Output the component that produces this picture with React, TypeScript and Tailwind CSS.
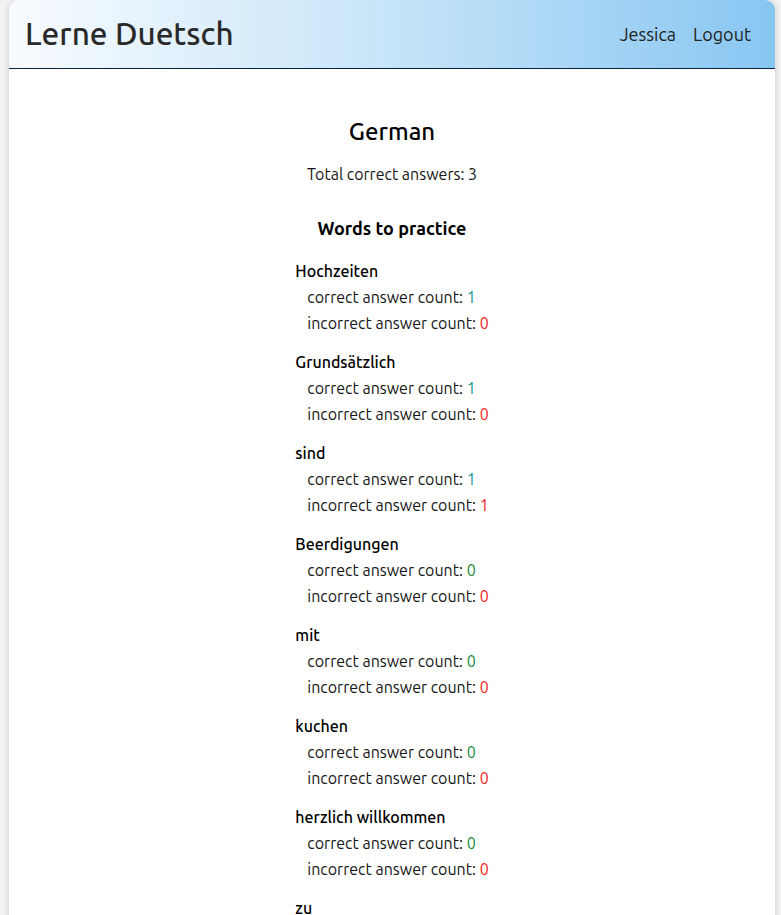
const words = [
  { word: "Hochzeiten", correct: 1, incorrect: 0 },
  { word: "Grundsätzlich", correct: 1, incorrect: 0 },
  { word: "sind", correct: 1, incorrect: 1 },
  { word: "Beerdigungen", correct: 0, incorrect: 0 },
  { word: "mit", correct: 0, incorrect: 0 },
  { word: "kuchen", correct: 0, incorrect: 0 },
  { word: "herzlich willkommen", correct: 0, incorrect: 0 },
  { word: "zu", correct: 0, incorrect: 0 },
];

function WordItem({ word, correct, incorrect }: { word: string; correct: number; incorrect: number }) {
  return (
    <li className="mb-[13px]">
      <h4 className="h-[26px] text-[16px] font-medium leading-[26px] text-black">{word}</h4>
      <div className="pl-3 leading-[26px]">
        correct answer count:{" "}
        <span className={correct > 0 ? "text-[#12978c]" : "text-[#1a8a3a]"}>{correct}</span>
      </div>
      <div className="pl-3 leading-[26px]">
        incorrect answer count: <span className="text-[#f21d1d]">{incorrect}</span>
      </div>
    </li>
  );
}

export default function App() {
  return (
    <div
      className="min-h-screen bg-[#f3f3f3] pl-[9px] pr-[6px] text-[#161616]"
      style={{ fontFamily: "Ubuntu, 'Noto Sans', 'Open Sans', sans-serif" }}
    >
      <div className="min-h-[1000px] rounded-t-[10px] bg-white shadow-[0_0_6px_rgba(0,0,0,0.18)]">
        <header className="flex h-[69px] items-center justify-between rounded-t-[10px] border-b border-[#0d2440] bg-gradient-to-r from-[#f7fbff] via-[#c6e4f8] to-[#87c6f2] pl-4 pr-[24px]">
          <h1 className="text-[31.5px] font-medium text-[#2a2a2a]">Lerne Duetsch</h1>
          <nav className="flex gap-[17px] text-[18px] text-[#222]">
            <a>Jessica</a>
            <a>Logout</a>
          </nav>
        </header>

        <main className="flex flex-col items-center pt-[45px] text-[16px]">
          <h2 className="text-[24px] font-medium text-black">German</h2>
          <p className="mt-[12px]">Total correct answers: 3</p>
          <h3 className="mt-[29px] text-[18px] font-bold text-black">Words to practice</h3>
          <ul className="mt-[16px]">
            {words.map((w) => (
              <WordItem key={w.word} {...w} />
            ))}
          </ul>
        </main>
      </div>
    </div>
  );
}
